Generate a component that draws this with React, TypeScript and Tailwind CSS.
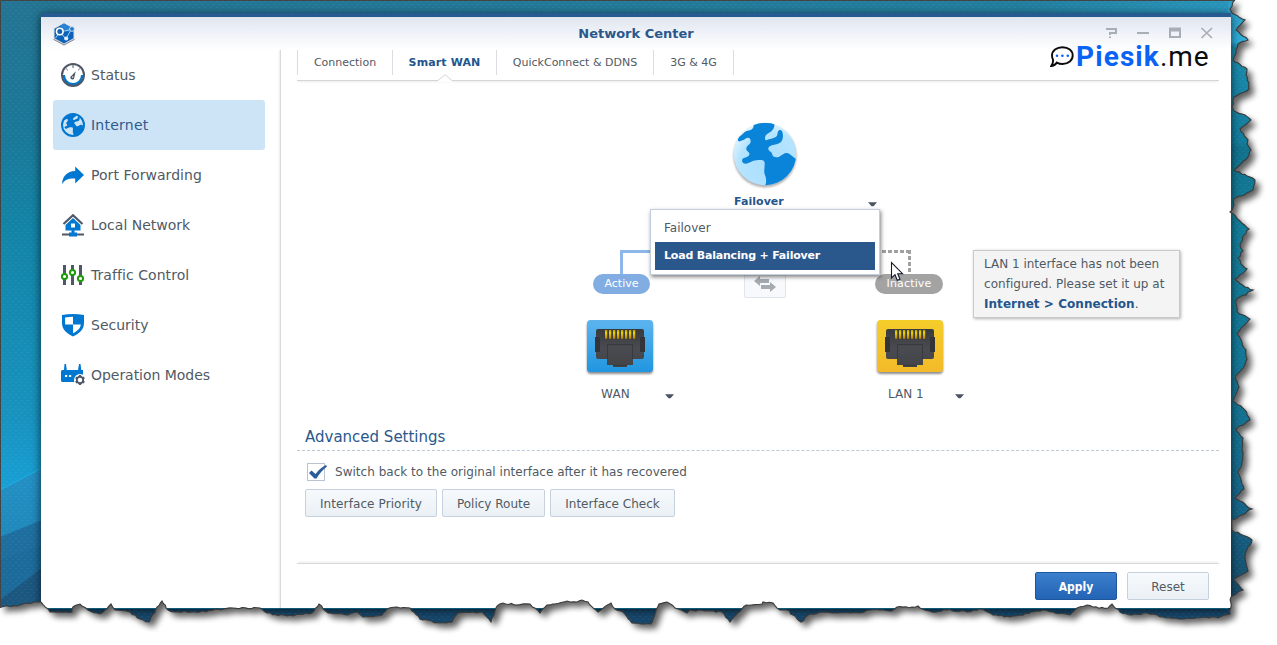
import React from "react";

type Pt = [number, number];

const RIGHT_EDGE: Pt[] = [
  [1235, 0], [1230, 9], [1232, 13], [1245, 20], [1236, 30], [1248, 40], [1238, 44], [1236, 53], [1233, 60], [1247, 69], [1246, 75],
  [1249, 83], [1249, 89], [1234, 97], [1232, 107], [1234, 111], [1245, 115], [1251, 120], [1240, 129], [1248, 140], [1247, 144],
  [1251, 150], [1248, 157], [1234, 170], [1255, 180], [1253, 190], [1241, 196], [1234, 199], [1234, 205], [1230, 212], [1240, 221],
  [1249, 229], [1244, 235], [1240, 245], [1243, 251], [1238, 258], [1243, 266], [1247, 269], [1235, 279], [1245, 287], [1253, 290],
  [1236, 300], [1237, 312], [1250, 319], [1237, 333], [1246, 350], [1247, 359], [1243, 368], [1235, 378], [1239, 387], [1233, 401],
  [1245, 410], [1250, 420], [1236, 429], [1243, 438], [1242, 462], [1238, 473], [1244, 489], [1235, 498], [1252, 509], [1232, 520],
  [1232, 530], [1252, 540], [1245, 555], [1248, 571], [1234, 579], [1243, 590], [1231, 597], [1230, 614],
];

const BOTTOM_EDGE: Pt[] = [
  [1218, 618], [1215, 617], [1182, 619], [1163, 617], [1147, 613], [1132, 615], [1120, 612], [1112, 604], [1108, 608], [1093, 607],
  [1087, 605], [1077, 608], [1070, 615], [1053, 612], [1043, 610], [1020, 615], [1010, 617], [993, 615], [980, 609], [967, 612],
  [947, 610], [932, 612], [920, 608], [918, 606], [912, 607], [897, 607], [892, 611], [870, 610], [860, 613], [823, 612], [810, 614],
  [801, 622], [793, 615], [787, 610], [780, 610], [773, 603], [763, 602], [762, 604], [746, 605], [730, 622], [722, 612], [690, 610],
  [687, 613], [675, 608], [667, 602], [659, 604], [651, 624], [632, 623], [623, 612], [615, 609], [611, 603], [598, 612], [588, 602],
  [582, 600], [577, 602], [567, 601], [547, 605], [540, 613], [530, 604], [517, 605], [503, 603], [497, 606], [491, 622], [482, 612],
  [458, 613], [452, 622], [440, 623], [420, 619], [410, 608], [397, 607], [387, 609], [382, 615], [363, 617], [357, 612], [348, 615],
  [328, 613], [319, 604], [312, 613], [287, 616], [267, 613], [260, 608], [233, 608], [200, 612], [175, 612], [168, 610], [162, 601],
  [157, 607], [149, 622], [140, 619], [130, 612], [115, 610], [111, 604], [100, 614], [88, 610], [80, 604], [73, 607], [72, 612],
  [50, 612], [41, 602], [28, 603], [17, 606], [5, 606], [2, 607], [0, 608],
];

/* Adds small deterministic notches between the traced points. */
function roughen(points: Pt[]): string {
  const out: string[] = [];
  let seed = 7;
  for (let i = 0; i < points.length - 1; i++) {
    const [x0, y0] = points[i];
    const [x1, y1] = points[i + 1];
    const len = Math.hypot(x1 - x0, y1 - y0) || 1;
    const steps = Math.max(1, Math.round(len / 3));
    for (let s = 0; s < steps; s++) {
      seed = (seed * 16807) % 2147483647;
      const j = s === 0 ? 0 : (seed / 2147483647 - 0.5) * 1.6;
      const t = s / steps;
      const nx = -(y1 - y0) / len;
      const ny = (x1 - x0) / len;
      out.push(`${(x0 + (x1 - x0) * t + nx * j).toFixed(1)} ${(y0 + (y1 - y0) * t + ny * j).toFixed(1)}`);
    }
  }
  return out.join(" L");
}

const EDGE = roughen([...RIGHT_EDGE, ...BOTTOM_EDGE]);
const SHAPE = `M0 0 L${EDGE} L0 608 Z`;
const CLIP = { clipPath: `path("${SHAPE}")` };

const LAND =
  "M14 47C17 40 24 38 30 31C38 22 55 26 59 14L61 0H122C124 14 118 24 105 31C96 36 94 41 94 48C95 54 99 53 106 50C120 46 130 43 131 36C132 25 136 20 142 23C149 27 149 43 146 51C143 60 135 64 122 66C110 68 103 72 104 79C105 87 114 86 115 93C117 103 126 106 137 102C148 96 153 89 163 92C173 96 177 104 190 110V190H94C99 180 98 166 94 158C89 148 94 132 93 122C93 115 88 112 81 112C72 112 65 112 57 115C46 120 38 126 30 122C23 118 24 108 30 106C38 104 49 100 47 92C45 86 36 84 38 77C40 68 51 66 51 56C51 46 44 42 34 49C28 54 24 52 20 56C13 58 11 52 14 47Z";

function Backdrop() {
  return (
    <svg className="absolute inset-0" width="1277" height="645" viewBox="0 0 1277 645" aria-hidden="true">
      <defs>
        <linearGradient id="left" x1="0" y1="0" x2="0" y2="1">
          <stop offset="0" stopColor="#247493" />
          <stop offset=".2" stopColor="#1b7898" />
          <stop offset=".35" stopColor="#1384a6" />
          <stop offset=".65" stopColor="#1893bf" />
          <stop offset=".78" stopColor="#18a2da" />
          <stop offset="1" stopColor="#18a2da" />
        </linearGradient>
        <linearGradient id="top" x1="0" y1="0" x2="1" y2="0">
          <stop offset="0" stopColor="#247493" />
          <stop offset=".8" stopColor="#237f9f" />
          <stop offset="1" stopColor="#2b9bc3" />
        </linearGradient>
        <linearGradient id="right" x1="0" y1="0" x2="0" y2="1">
          <stop offset="0" stopColor="#2d9cc4" />
          <stop offset=".065" stopColor="#2eaedb" />
          <stop offset=".072" stopColor="#1b8cae" />
          <stop offset=".22" stopColor="#137c9c" />
          <stop offset=".23" stopColor="#11728e" />
          <stop offset=".35" stopColor="#127c98" />
          <stop offset=".6" stopColor="#147594" />
          <stop offset=".8" stopColor="#166386" />
          <stop offset=".9" stopColor="#17506f" />
          <stop offset="1" stopColor="#184565" />
        </linearGradient>
        <linearGradient id="band" x1="0" y1="0" x2="0" y2="1">
          <stop offset="0" stopColor="#2390c4" />
          <stop offset="1" stopColor="#1d7eac" />
        </linearGradient>
        <pattern id="dots" width="6" height="6" patternUnits="userSpaceOnUse">
          <path d="M0 1h2v1H0zM3 4h2v1H3z" fill="#fff" opacity=".05" />
        </pattern>
        <filter id="soft" x="-2%" y="-4%" width="104%" height="108%">
          <feGaussianBlur stdDeviation="3" />
        </filter>
        <clipPath id="torn"><path d={SHAPE} /></clipPath>
      </defs>
      <path d={SHAPE} transform="translate(5 5)" fill="#000" opacity=".62" filter="url(#soft)" />
      <g clipPath="url(#torn)">
        <rect width="1277" height="645" fill="url(#left)" />
        <rect width="1277" height="16" fill="url(#top)" />
        <rect x="1228" width="40" height="645" fill="url(#right)" />
        <path d="M0 490L42 468V645H0Z" fill="url(#band)" />
        <path d="M0 490L42 468" stroke="#1eaee6" />
        <path d="M0 537L42 520V645H0Z" fill="#1e6f9f" />
        <path d="M0 560L42 545V645H0Z" fill="#1c6997" opacity=".6" />
        <path d="M0 600L42 568V645H0Z" fill="#1c5780" />
        <rect y="609" x="41" width="1190" height="36" fill="#16476b" />
        <rect width="1277" height="645" fill="url(#dots)" />
      </g>
    </svg>
  );
}

function AppLogo() {
  return (
    <svg width="24" height="24" viewBox="0 0 24 24" className="shrink-0">
      <path d="M12 .5L22.500 6.200V17.500L12 23.500L1.500 17.500V6.200Z" fill="#dcdfe4" />
      <path d="M1.500 17.300L12 23L22.500 17.300" fill="none" stroke="#85878b" />
      <path d="M12 1.500L21.500 6.800V16.200L12 21.500L2.500 16.200V6.800Z" fill="#0b62b8" />
      <path d="M12 1.500L21.500 6.800L15 10L8 4Z" fill="#2a82d4" />
      <path d="M8 10L3.500 16M8 10L14 17M8 10L19 7.500M19 7.500L14 17" stroke="#a8cdf0" strokeWidth="1" />
      <circle cx="7.800" cy="9.500" r="3.300" fill="#0b62b8" stroke="#fff" strokeWidth="1.600" />
      <circle cx="20" cy="7" r="2.400" fill="#1b78cf" stroke="#e7edf5" strokeWidth=".8" />
      <circle cx="14.200" cy="16.500" r="2.100" fill="#e4eefa" />
    </svg>
  );
}

function StatusIcon() {
  return (
    <svg width="24" height="24" viewBox="0 0 24 24">
      <path d="M1.500 12H4A8 8 0 0 0 20 12H22.500A10.500 10.500 0 0 1 1.500 12Z" fill="#0077d0" />
      <circle cx="12" cy="12" r="11" fill="none" stroke="#4e5866" strokeWidth="2" />
      <path d="M12 2V5M5.200 5.600L6.800 7.200M18.800 5.600L17.200 7.200" stroke="#4e5866" strokeWidth="1" />
      <path d="M14.800 8.300L13.300 14.400A2 2 0 1 1 10.500 12.700Z" fill="#4e5866" />
      <circle cx="11.700" cy="14" r=".7" fill="#fff" />
    </svg>
  );
}

function InternetIcon() {
  return (
    <svg width="24" height="24" viewBox="0 0 24 24">
      <clipPath id="gl"><circle cx="12" cy="12" r="11" /></clipPath>
      <g clipPath="url(#gl)">
        <path d={LAND} transform="translate(.5 .5) scale(.123)" fill="#0077d0" />
      </g>
      <circle cx="12" cy="12" r="11" fill="none" stroke="#0077d0" strokeWidth="2" />
    </svg>
  );
}

function ForwardIcon() {
  return (
    <svg width="24" height="24" viewBox="0 0 24 24">
      <path d="M14.200 3.500L23 12L14.200 20.500V15.500C8 15 4 16.500 1 21C1.500 13 6 8.500 14.200 8Z" fill="#0077d0" />
    </svg>
  );
}

function HomeIcon() {
  return (
    <svg width="24" height="24" viewBox="0 0 24 24">
      <path d="M2.500 11L12 2.200L21.500 11" fill="none" stroke="#4e5866" strokeWidth="2.200" />
      <path d="M12 5L19.500 12V17.500H13.500V19.500H16V23.500H8V19.500H10.500V17.500H4.500V12Z" fill="#0077d0" />
      <path d="M10 10.500H14V14.500H10Z" fill="#fff" />
      <path d="M1 20.500H8V22.500H1ZM16 20.500H23V22.500H16Z" fill="#4e5866" />
    </svg>
  );
}

function TrafficIcon() {
  return (
    <svg width="24" height="24" viewBox="0 0 24 24">
      <path d="M2 2H5V22H2ZM10 2H13V22H10ZM18 2H21V22H18Z" fill="#4e5866" />
      <g fill="#fff" stroke="#1f9c0d" strokeWidth="2">
        <circle cx="3.500" cy="13.500" r="2.600" />
        <circle cx="11.500" cy="9.500" r="2.600" />
        <circle cx="19.500" cy="15.500" r="2.600" />
      </g>
    </svg>
  );
}

function ShieldIcon() {
  return (
    <svg width="24" height="24" viewBox="0 0 24 24">
      <path d="M1 2Q12 -.2 23 2V10C23 16.500 18.500 20.500 12 23.500C5.500 20.500 1 16.500 1 10Z" fill="#0077d0" />
      <path d="M4 4.500Q8 3.700 12 3.700V11.500H4.200ZM12 11.500H19.800C19.300 15.500 16.500 18.200 12 20.200Z" fill="#fff" />
    </svg>
  );
}

function ModesIcon() {
  return (
    <svg width="25" height="24" viewBox="0 0 25 24" className="-mr-px">
      <path d="M3.500 1H5L5.800 7H17L18 1H19.500L20.300 7H22V19H1.500Q0 19 0 17.500V8.500Q0 7 1.500 7H3Z" fill="#0077d0" />
      <path d="M4 12H6.200V14H4ZM8 12H10.200V14H8Z" fill="#fff" />
      <circle cx="19" cy="17" r="6" fill="#fff" />
      <circle cx="19" cy="17" r="3.200" fill="none" stroke="#4e5866" strokeWidth="1.900" />
      <path d="M19 12V14M19 20V22M14.700 14.500L16.400 15.500M21.600 18.500L23.300 19.500M14.700 19.500L16.400 18.500M21.600 15.500L23.300 14.500" stroke="#4e5866" strokeWidth="2.200" />
    </svg>
  );
}

function GlobeIcon() {
  return (
    <svg width="68" height="70" viewBox="0 0 68 70">
      <defs>
        <radialGradient id="sea" cx=".6" cy=".7" r=".75">
          <stop offset="0" stopColor="#a9deff" />
          <stop offset=".7" stopColor="#b5e4ff" />
          <stop offset="1" stopColor="#e8f6ff" />
        </radialGradient>
        <clipPath id="big"><circle cx="34" cy="33" r="31.200" /></clipPath>
        <filter id="gs"><feGaussianBlur stdDeviation="1" /></filter>
      </defs>
      <circle cx="34" cy="35" r="31.500" fill="#000" opacity=".3" filter="url(#gs)" />
      <circle cx="34" cy="33" r="31.200" fill="url(#sea)" />
      <g clipPath="url(#big)">
        <path d={LAND} transform="translate(2.700 1.700) scale(.333)" fill="#0a84d8" />
      </g>
    </svg>
  );
}

function PortIcon({ kind }: { kind: "wan" | "lan" }) {
  const top = kind === "wan" ? "#5db4ee" : "#f4cd2a";
  const bottom = kind === "wan" ? "#2096e0" : "#f3ba29";
  const pins = [0, 1, 2, 3, 4, 5, 6, 7];
  return (
    <svg width="70" height="58" viewBox="0 0 70 58" className="block">
      <defs>
        <linearGradient id={kind} x1="0" y1="0" x2="0" y2="1">
          <stop offset="0" stopColor={top} />
          <stop offset="1" stopColor={bottom} />
        </linearGradient>
        <linearGradient id={`${kind}-body`} x1="0" y1="0" x2="0" y2="1">
          <stop offset="0" stopColor="#393a3e" />
          <stop offset=".5" stopColor="#4a4b50" />
          <stop offset="1" stopColor="#434448" />
        </linearGradient>
        <linearGradient id={`${kind}-pin`} x1="0" y1="0" x2="0" y2="1">
          <stop offset="0" stopColor="#b89b00" />
          <stop offset=".3" stopColor="#f0d800" />
          <stop offset="1" stopColor="#b57f10" />
        </linearGradient>
        <filter id={`${kind}-s`}><feGaussianBlur stdDeviation=".9" /></filter>
      </defs>
      <rect x="2" y="3" width="66" height="52" rx="4" fill="#000" opacity=".45" filter={`url(#${kind}-s)`} />
      <rect x="2" y="1" width="66" height="52" rx="3.500" fill={`url(#${kind})`} />
      <path d="M13 10H57Q59 10 59 12V38Q59 40 57 40H48V46H42V48H28V46H22V40H13Q11 40 11 38V12Q11 10 13 10Z" fill={`url(#${kind}-body)`} />
      <path d="M22.500 40V25.500H47.500V40" fill="none" stroke="#38393d" />
      <path d="M28 46.500H42" stroke="#38393d" />
      <rect x="10" y="18" width="5" height="15" fill="#333438" />
      <rect x="55" y="18" width="5" height="15" fill="#333438" />
      <rect x="19" y="11" width="32" height="9.500" fill="#3f3e38" />
      {pins.map((p) => (
        <rect key={p} x={20 + p * 4} y="11" width="2.200" height="8.800" fill={`url(#${kind}-pin)`} />
      ))}
    </svg>
  );
}

function Caret({ className = "" }: { className?: string }) {
  return (
    <svg width="9" height="5" viewBox="0 0 9 5" className={className}>
      <path d="M0 .3H9L5.500 4.300H3.500Z" fill="#4b5460" />
    </svg>
  );
}

const NAV = [
  { label: "Status", icon: <StatusIcon /> },
  { label: "Internet", icon: <InternetIcon />, active: true, track: "tracking-[0.24px]" },
  { label: "Port Forwarding", icon: <ForwardIcon />, track: "tracking-[0.05px]" },
  { label: "Local Network", icon: <HomeIcon /> },
  { label: "Traffic Control", icon: <TrafficIcon />, track: "tracking-[0.06px]" },
  { label: "Security", icon: <ShieldIcon /> },
  { label: "Operation Modes", icon: <ModesIcon />, track: "tracking-[-0.04px]" },
];

function Sidebar() {
  return (
    <nav className="w-[240px] shrink-0 border-r border-[#d9d9d9] pl-3 shadow-[inset_-2px_0_2px_-1px_#ececec]">
      {NAV.map((n) => (
        <div
          key={n.label}
          className={`flex h-[50px] w-[212px] items-center gap-1.5 rounded-[3px] pl-2 text-[14px] ${n.active ? "bg-[#cde3f6] text-[#2f5a8f]" : "text-[#505a64]"} ${n.track ?? ""}`}
        >
          {n.icon}
          <span>{n.label}</span>
        </div>
      ))}
    </nav>
  );
}

function TitleBar() {
  return (
    <header className="flex h-[33px] items-center bg-linear-to-b from-[#e0e6f0] to-white pl-[11px] pr-[17px]">
      <AppLogo />
      <div className="flex-1 pl-[91px] text-center text-[13px] font-bold text-[#2a588c]">Network Center</div>
      <svg width="109" height="12" viewBox="0 0 109 12" fill="none" stroke="#a9aeb6" strokeWidth="2" className="mb-px shrink-0">
        <path d="M1 2H11V6H5V8M5 9.500V11" />
        <path d="M32 6H44" />
        <path d="M65 1.500H75V10H65Z" />
        <path d="M64 3H76" strokeWidth="3" />
        <path d="M96.500 1L107 11M107 1L96.500 11" strokeWidth="1.700" />
      </svg>
    </header>
  );
}

function Tabs() {
  const base = "relative flex h-[25px] items-center justify-center border-r border-[#d9dde2] pt-px text-[11px]";
  return (
    <div className="flex h-[31px] border-b border-[#d3d6d9] shadow-[0_2px_2px_-1px_#ececec]">
      <div className={`${base} w-24 border-l text-[#505a64]`}>Connection</div>
      <div className={`${base} w-[104px] font-bold tracking-[0.12px] text-[#24558c]`}>
        Smart WAN
        <svg width="14" height="8" viewBox="0 0 14 8" className="absolute left-[45px] top-6">
          <path d="M0 6.500L7 0L14 6.500V8H0Z" fill="#fff" />
          <path d="M0 6.500L7 .7L14 6.500" fill="none" stroke="#d3d6d9" />
        </svg>
      </div>
      <div className={`${base} w-[157px] text-[#505a64]`}>QuickConnect &amp; DDNS</div>
      <div className={`${base} w-[80px] text-[#505a64]`}>3G &amp; 4G</div>
    </div>
  );
}

function Brand() {
  return (
    <div className="absolute left-[1050px] top-[42px] flex items-center font-[Roboto] text-[28px] leading-[30px] text-[#0b0b0b]">
      <svg width="24" height="22" viewBox="0 0 24 22" className="mr-[2px]">
        <path d="M12.500 1.200C18.500 1.200 22.700 4.800 22.700 9.500C22.700 14.300 18.500 18 12.500 18C10.500 18 8.500 17.500 6.800 16.600C5.500 18.500 3.500 20 1.200 20C2.500 18.500 3.300 16 3 13.500C2.300 12.300 2 10.900 2 9.500C2 4.800 6.500 1.200 12.500 1.200Z" fill="#fff" stroke="#0b0b0b" strokeWidth="1.900" />
        <circle cx="7" cy="9.700" r="1.300" fill="#0a63f5" />
        <circle cx="12.400" cy="9.700" r="1.300" fill="#0a63f5" />
        <circle cx="17.800" cy="9.700" r="1.300" fill="#0a63f5" />
      </svg>
      <span className="font-bold tracking-[1.1px] text-[#0a63f5]">Piesik</span>
      <span className="tracking-[0.9px]">.me</span>
    </div>
  );
}

/* The topology is a free canvas: its nodes are placed by coordinate. */
function Topology() {
  return (
    <div className="relative h-[345px]">
      <div className="absolute left-[434px] top-[40px]"><GlobeIcon /></div>
      <div className="absolute left-[437px] top-[113px] text-[11px] font-bold leading-4 tracking-[0.05px] text-[#24558c]">Failover</div>
      <Caret className="absolute left-[571px] top-[121px]" />

      <div className="absolute left-[323px] top-[169px] h-6 w-40 border-l-[3px] border-t-[3px] border-[#8db6e9]" />
      <svg width="40" height="24" viewBox="0 0 40 24" className="absolute left-[574px] top-[169px]">
        <path d="M0 1.500H40" stroke="#a0a0a0" strokeWidth="3" strokeDasharray="4 2" strokeDashoffset="1" />
        <path d="M38.500 0V24" stroke="#a0a0a0" strokeWidth="3" strokeDasharray="4 2" />
      </svg>
      <div className="absolute left-[296px] top-[193px] flex h-5 w-[57px] items-center justify-center rounded-full bg-[#82ade2] pt-px text-[11px] text-white">Active</div>
      <div className="absolute left-[578px] top-[193px] flex h-5 w-[68px] items-center justify-center rounded-full bg-[#a3a3a3] pt-px text-[11px] tracking-[0.15px] text-white">Inactive</div>
      <div className="absolute left-[447px] top-[188px] flex h-[29px] w-[42px] items-center justify-center rounded-[2px] border border-[#dfe5ec] bg-[#f7f9fc]">
        <svg width="22" height="16" viewBox="0 0 22 16" fill="#a5abb0" className="mt-px">
          <path d="M0 5L6 0V3H15V7H6V10Z" />
          <path d="M22 11L16 6V9H7V13H16V16Z" />
        </svg>
      </div>

      <div className="absolute left-[288px] top-[238px]"><PortIcon kind="wan" /></div>
      <div className="absolute left-[578px] top-[238px]"><PortIcon kind="lan" /></div>
      <div className="absolute left-[304px] top-[305px] text-[12px] leading-4 tracking-[0.2px] text-[#505a64]">WAN</div>
      <Caret className="absolute left-[368px] top-[313px]" />
      <div className="absolute left-[591px] top-[305px] text-[12px] leading-4 text-[#505a64]">LAN 1</div>
      <Caret className="absolute left-[658px] top-[313px]" />

      <div className="absolute left-[353px] top-[128px] h-[66px] w-[230px] border border-[#c3cfdc] bg-white p-1 shadow-[1px_2px_4px_rgba(0,0,0,0.5)]">
        <div className="flex h-7 items-center px-[9px] text-[12px] text-[#505a64]">Failover</div>
        <div className="flex h-7 items-center whitespace-nowrap bg-[#2a588c] px-[9px] text-[11px] font-bold tracking-[-0.19px] text-white">Load Balancing + Failover</div>
      </div>

      <div className="absolute left-[676px] top-[169px] h-[68px] w-[207px] whitespace-nowrap border border-[#c9c9c9] bg-[#f4f4f4] px-[10px] py-[3px] text-[12px] leading-5 text-[#505a64] shadow-[1px_1px_3px_rgba(0,0,0,0.3)]">
        LAN 1 interface has not been
        <br />
        <span className="tracking-[0.03px]">configured. Please set it up at</span>
        <br />
        <b className="tracking-[0.05px] text-[#24558c]">Internet &gt; Connection</b>.
      </div>

      <svg width="14" height="22" viewBox="0 0 14 22" className="absolute left-[593px] top-[180px]">
        <path d="M1.500 1.500V17L5 13.700L7.300 19.300L10 18.200L7.700 12.700H12.500Z" fill="#fff" stroke="#151a2c" strokeWidth="1.100" />
      </svg>
    </div>
  );
}

const BTN = "flex h-7 items-center justify-center rounded-[2px] border pt-px text-[12px]";
const LIGHT = "border-[#c5d1de] bg-linear-to-b from-[#f6fafd] to-[#ebf0f5] text-[#505a64]";

function Advanced() {
  return (
    <section className="h-[137px]">
      <h2 className="flex h-[25px] items-center border-b border-dashed border-[#bcc9d8] pb-0.5 pl-2 text-[15px] text-[#2a588c]">Advanced Settings</h2>
      <div className="flex h-[38px] items-center gap-2.5 pl-2.5 pt-[4px]">
        <div className="h-[18px] w-[18px] shrink-0 border border-[#b9c4d3] bg-white">
          <svg width="20" height="16" viewBox="0 0 20 16" className="overflow-visible">
            <path d="M1 9L3.500 6.500L7.500 10Q12 4 18 1L19 2.500Q13 7 8.500 14.500H6.500Z" fill="#2a5c9c" />
          </svg>
        </div>
        <span className="text-[12px] tracking-[0.025px] text-[#505a64]">Switch back to the original interface after it has recovered</span>
      </div>
      <div className="flex gap-[5px] pl-2">
        <div className={`${BTN} ${LIGHT} w-[132px] tracking-[0.1px]`}>Interface Priority</div>
        <div className={`${BTN} ${LIGHT} w-[103px]`}>Policy Route</div>
        <div className={`${BTN} ${LIGHT} w-[125px]`}>Interface Check</div>
      </div>
    </section>
  );
}

export default function App() {
  return (
    <div className="relative h-[645px] w-[1277px] overflow-hidden bg-white font-['DejaVu_Sans',sans-serif]">
      <Backdrop />
      <div className="relative h-[645px] pl-[41px] pt-[13px]" style={CLIP}>
        <div className="flex h-[595px] w-[1190px] flex-col border-t-4 border-[#285a92] bg-white shadow-[0_2px_9px_rgba(0,0,0,0.7)]">
          <TitleBar />
          <div className="flex min-h-0 flex-1">
            <Sidebar />
            <main className="flex w-[938px] flex-col pl-4">
              <Tabs />
              <Topology />
              <Advanced />
              <div className="flex flex-1 justify-end gap-2.5 border-t border-[#dadada] pr-2.5 pt-2 shadow-[0_-2px_2px_-1px_#ececec]">
                <div className={`${BTN} w-[82px] border-[#20569c] bg-linear-to-b from-[#3b7fcd] to-[#2364b4] font-bold text-white font-[DejaVu_Sans_Condensed]`}>Apply</div>
                <div className={`${BTN} ${LIGHT} w-[82px]`}>Reset</div>
              </div>
            </main>
          </div>
        </div>
        <Brand />
      </div>
      <svg className="pointer-events-none absolute inset-0" width="1277" height="645" viewBox="0 0 1277 645" aria-hidden="true">
        <path d={`M${EDGE}`} fill="none" stroke="#3a3a3a" strokeWidth="1.100" />
        <path d="M.500 608V.500H1235" fill="none" stroke="#444" />
      </svg>
    </div>
  );
}
